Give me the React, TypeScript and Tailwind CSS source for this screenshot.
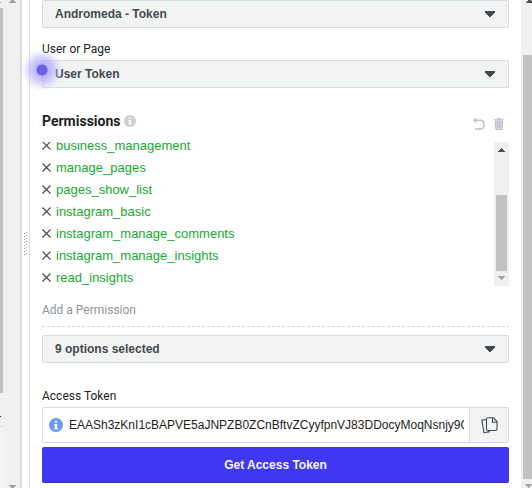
const permissions = [
  'business_management',
  'manage_pages',
  'pages_show_list',
  'instagram_basic',
  'instagram_manage_comments',
  'instagram_manage_insights',
  'read_insights',
];

function Select({ label }: { label: string }) {
  return (
    <button className="flex h-7 w-full shrink-0 items-center justify-between rounded-[2px] border border-[#d8dae2] bg-[#f2f4f4] pr-[13px] pl-3 text-[12px] font-bold text-[#444950]">
      <span>{label}</span>
      <svg width="10" height="6" viewBox="0 0 10 6" fill="#444950" shapeRendering="crispEdges">
        <path d="M0 0h10v2H9v1H8v1H7v1H6v1H4V5H3V4H2V3H1V2H0z" />
      </svg>
    </button>
  );
}

function Triangle({ up = false, color }: { up?: boolean; color: string }) {
  return (
    <svg width="7" height="4" viewBox="0 0 7 4" fill={color} shapeRendering="crispEdges" className="shrink-0">
      <path d={up ? 'M3 0h1v1h1v1h1v1h1v1H0V3h1V2h1V1h1z' : 'M0 0h7v1H6v1H5v1H4v1H3V3H2V2H1V1H0z'} />
    </svg>
  );
}

function InfoIcon({ size, color }: { size: number; color: string }) {
  return (
    <svg width={size} height={size} viewBox="0 0 14 14" className="shrink-0">
      <circle cx="7" cy="7" r="7" fill={color} />
      <path d="M5.900 2.800h2.200v2H5.900zM5 5.900H8.100v4h1v1.300H5V9.900h.9V7.200H5z" fill="#fff" />
    </svg>
  );
}

function LeftPane() {
  return (
    <div className="flex h-full w-[22px] shrink-0 border-r-2 border-[#d8dbe0] bg-[#f0f0f0]">
      <div className="flex w-[5px] flex-col">
        <div className="h-2 w-px pt-[2px]">
          <div className="h-px bg-[#999]" />
        </div>
        <div className="h-[385px] w-[3px] bg-[#c1c1c1]" />
        <div className="h-[33px] pt-[23px]">
          <div className="h-px w-px bg-[#333]" />
        </div>
        <div className="flex-1 border-t border-[#d8dae2] bg-[#f2f4f4]" />
      </div>
      <div className="flex flex-1 flex-col items-center justify-between">
        <div className="-mt-px">
          <Triangle up color="#a3a3a3" />
        </div>
        <div className="-mb-px">
          <Triangle color="#a3a3a3" />
        </div>
      </div>
    </div>
  );
}

function Divider() {
  return (
    <div className="flex w-2 shrink-0 items-center justify-center border-r border-[#d8dae2]">
      <svg width="4" height="24" viewBox="0 0 4 24" fill="#999" shapeRendering="crispEdges">
        {[0, 1, 2, 3, 4, 5, 6, 7].map((i) => (
          <g key={i}>
            <rect x="0" y={i * 3 + 1} width="1" height="1" />
            <rect x="2" y={i * 3} width="1" height="1" />
          </g>
        ))}
      </svg>
    </div>
  );
}

export default function App() {
  return (
    <div className="flex h-[488px] w-[532px] overflow-hidden bg-white font-['Liberation_Sans',Arial,sans-serif] text-[#1c1e21]">
      <LeftPane />
      <Divider />
      <main className="flex w-[491px] shrink-0 flex-col pr-3 pl-3">
        <Select label="Andromeda - Token" />
        <div className="flex h-8 shrink-0 items-center pt-[9px] font-[Roboto,sans-serif] text-[12px]">User or Page</div>
        <div className="relative shrink-0">
          <Select label="User Token" />
          <div className="absolute -top-[10px] -left-[20px] size-10 rounded-full bg-[radial-gradient(circle,#6a5eea_0_5px,#9388f599_6px,#a79cf988_11px,#bdb3fb77_14px,#d5cffd55_17px,#e5e2fe33_20px)]" />
        </div>

        <div className="mt-[24px] flex h-[30px] shrink-0 justify-between">
          <div className="flex h-[17px] items-center gap-1">
            <h2 className="pt-[2px] font-[Roboto,sans-serif] text-[14px] font-bold">Permissions</h2>
            <InfoIcon size={12} color="#ccced5" />
          </div>
          <div className="flex gap-[9px] pt-[6px] pr-[5px]">
            <svg width="12" height="12" viewBox="0 0 12 12" fill="none" stroke="#bec1c8" strokeWidth="1.5">
              <path d="M3.200.3 1 2.300l2.200 2M1 2.300h6.200c5.200 0 5.200 8.800 0 8.800H2" />
            </svg>
            <svg width="10" height="12" viewBox="0 0 10 12" fill="none" stroke="#b9bcc4">
              <path d="M1.300 3h7.400l-.5 8.400H1.800z" fill="#d9dbe0" />
              <path d="M0 1.700h10M3 .6h4M3.600 4v6M5 4v6M6.400 4v6" strokeWidth=".9" />
            </svg>
          </div>
        </div>

        <div className="flex h-[144px] shrink-0 overflow-hidden">
          <ul className="-mt-[7px] flex-1">
            {permissions.map((name) => (
              <li key={name} className="flex h-[22px] items-center gap-[5px] text-[13px] text-[#18a932]">
                <svg width="9" height="9" viewBox="0 0 9 9" stroke="#444950" strokeWidth="1.1" className="mb-[1px]">
                  <path d="M.5.5l8 8M8.500.5l-8 8" />
                </svg>
                <span>{name}</span>
              </li>
            ))}
          </ul>
          <div className="flex w-[15px] flex-col items-center bg-[#f0f0f0] pt-[6px]">
            <Triangle up color="#505050" />
            <div className="mt-[43px] h-[76px] w-[11px] bg-[#c1c1c1]" />
            <div className="mt-[5px] flex">
              <Triangle color="#a3a3a3" />
            </div>
          </div>
        </div>

        <div className="flex h-10 shrink-0 items-center pt-[8px] font-[Roboto,sans-serif] text-[12px] text-[#90949c]">Add a Permission</div>
        <div className="mb-2 h-px shrink-0 bg-[repeating-linear-gradient(90deg,#d8dae0_0_3px,transparent_3px_5px)]" />
        <Select label="9 options selected" />
        <div className="flex h-11 shrink-0 items-center pt-[22px] font-[Roboto,sans-serif] text-[12px]">Access Token</div>
        <div className="flex h-9 shrink-0 rounded-[2px] border border-[#d8dae2]">
          <div className="flex min-w-0 flex-1 items-center gap-[6px] pr-[5px] pl-[6px]">
            <InfoIcon size={14} color="#6c99f5" />
            <span className="min-w-0 flex-1 overflow-hidden text-[12px] whitespace-nowrap">
              EAASh3zKnI1cBAPVE5aJNPZB0ZCnBftvZCyyfpnVJ83DDocyMoqNsnjy9Q
            </span>
          </div>
          <button className="flex w-[39px] items-center justify-center border-l border-[#d8dae2] bg-[#f2f4f4]">
            <svg width="17" height="17" viewBox="0 0 17 17" fill="none" stroke="#444950" strokeWidth="1.1">
              <path d="M5 2.500.8 3.200 3 15.700l6-1.100" />
              <path d="M7 .8h5.400L16 4.500V12q0 1.500-1.500 1.500H7q-1.500 0-1.500-1.500V2.300Q5.500.8 7 .8zM11.500.8v4.500H16" />
            </svg>
          </button>
        </div>
        <button className="mt-1 h-9 shrink-0 rounded-[2px] border-b border-[#3b35c5] bg-[#4038f0] text-[12px] font-bold text-[#f5f6f7]">
          Get Access Token
        </button>
      </main>
      <div className="flex w-[11px] shrink-0 flex-col bg-[#f0f0f0] pl-[2px]">
        <div className="h-[55px] pl-[3px]">
          <div className="-mt-px w-[7px]">
            <Triangle up color="#505050" />
          </div>
        </div>
        <div className="h-[425px] bg-[#c1c1c1]" />
        <div className="pt-[5px] pl-[2px]">
          <Triangle color="#a3a3a3" />
        </div>
      </div>
    </div>
  );
}
